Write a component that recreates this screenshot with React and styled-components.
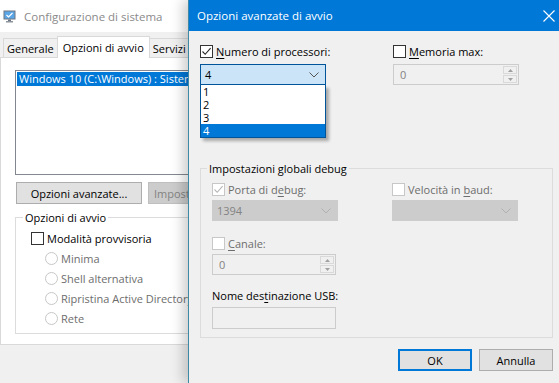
import React from 'react';
import styled, { createGlobalStyle } from 'styled-components';

const GlobalStyle = createGlobalStyle`
  html, body {
    margin: 0;
    padding: 0;
    background: #f0f0f0;
  }
  body {
    font-family: "Open Sans", "Noto Sans", sans-serif;
    font-size: 11px;
    color: #000;
  }
`;

const Screen = styled.div`
  display: flex;
  width: 559px;
  height: 383px;
  overflow: hidden;
  background: #f0f0f0;
`;

/* ---------- back window (Configurazione di sistema) ---------- */

const BackWindow = styled.div`
  flex: none;
  width: 188px;
  display: flex;
  flex-direction: column;
  overflow: hidden;
  background: #f0f0f0;
`;

const BackTitle = styled.div`
  flex: none;
  height: 32px;
  display: flex;
  align-items: center;
  gap: 7px;
  padding-left: 3px;
  background: #fff;
  color: #8a8a8a;
  font-size: 11.5px;
  white-space: nowrap;
`;

const TabStrip = styled.div`
  flex: none;
  height: 25px;
  display: flex;
  align-items: flex-end;
  padding-left: 3px;
  width: 420px;
`;

const Tab = styled.div`
  position: relative;
  height: ${p => (p.$active ? '21px' : '18px')};
  padding: 0 ${p => (p.$active ? '5px' : '3px')};
  margin: 0 ${p => (p.$active ? '-1px' : '0')};
  margin-bottom: ${p => (p.$active ? '-1px' : '0')};
  z-index: ${p => (p.$active ? 1 : 0)};
  display: flex;
  align-items: center;
  background: ${p => (p.$active ? '#fff' : '#f0f0f0')};
  border: 1px solid #d9d9d9;
  border-bottom: none;
  white-space: nowrap;
`;

const TabPanel = styled.div`
  flex: none;
  width: 420px;
  height: 288px;
  padding: 12px 0 0 14px;
  box-sizing: border-box;
  background: #fff;
  border: 1px solid #d9d9d9;
`;

const ListBox = styled.div`
  width: 300px;
  height: 105px;
  box-sizing: border-box;
  padding: 1px;
  border: 1px solid #828790;
  background: #fff;
`;

const ListItem = styled.div`
  height: 14px;
  line-height: 14px;
  padding-left: 2px;
  white-space: nowrap;
  background: ${p => (p.$selected ? '#0078d7' : 'transparent')};
  color: ${p => (p.$selected ? '#fff' : '#000')};
`;

const ButtonRow = styled.div`
  display: flex;
  gap: 6px;
  margin-top: 7px;
  margin-left: 1px;
`;

const Button = styled.div`
  flex: none;
  width: ${p => (p.$w ? `${p.$w}px` : 'auto')};
  height: 22px;
  padding: 0 5px;
  box-sizing: border-box;
  display: flex;
  align-items: center;
  justify-content: center;
  white-space: nowrap;
  background: ${p => (p.$disabled ? '#cccccc' : '#e1e1e1')};
  color: ${p => (p.$disabled ? '#838383' : '#000')};
  border: 1px solid ${p => (p.$default ? '#0078d7' : p.$disabled ? '#bfbfbf' : '#adadad')};
  box-shadow: ${p => (p.$default ? 'inset 0 0 0 1px #0078d7' : 'none')};
`;

const GroupBox = styled.fieldset`
  margin: ${p => p.$mt || 0}px 0 0 0;
  padding: 0 0 ${p => p.$pb || 6}px ${p => p.$pl || 8}px;
  border: 1px solid #dcdcdc;
  width: ${p => p.$w}px;
  box-sizing: border-box;
  min-width: 0;
`;

const Legend = styled.legend`
  padding: 0 2px;
  margin-left: ${p => p.$ml || 0}px;
  line-height: 15px;
  white-space: nowrap;
`;

const OptionRow = styled.div`
  height: 20px;
  display: flex;
  align-items: center;
  gap: 3px;
  margin-top: ${p => p.$mt || 0}px;
  padding-left: ${p => p.$indent || 0}px;
  white-space: nowrap;
  color: ${p => (p.$disabled ? '#6d6d6d' : '#000')};
`;

const Radio = styled.span`
  flex: none;
  width: 11px;
  height: 11px;
  border-radius: 50%;
  border: 1px solid #c7c7c7;
  background: #fff;
`;

/* ---------- dialog (Opzioni avanzate di avvio) ---------- */

const Dialog = styled.div`
  position: relative;
  z-index: 2;
  flex: 1;
  display: flex;
  flex-direction: column;
  border-left: 1px solid #3e8aa4;
  background: #f0f0f0;
  box-shadow: -5px 0 12px rgba(0, 0, 0, 0.2);
`;

const DialogTitle = styled.div`
  flex: none;
  height: 31px;
  display: flex;
  align-items: center;
  justify-content: space-between;
  padding: 0 4px 0 8px;
  background: #0078d7;
  color: #fff;
  font-size: 11.5px;
`;

const DialogBody = styled.div`
  padding: 13px 6px 0 11px;
`;

const TopGrid = styled.div`
  display: grid;
  grid-template-columns: 193px 126px;
  row-gap: 5px;
  align-items: center;
`;

const CheckLabel = styled.label`
  display: flex;
  align-items: center;
  gap: 3px;
  height: 15px;
  white-space: nowrap;
  color: ${p => (p.$disabled ? '#6d6d6d' : '#000')};
  & u {
    text-underline-offset: 2px;
  }
`;

const Box = styled.span`
  flex: none;
  width: 11px;
  height: 11px;
  display: flex;
  align-items: center;
  justify-content: center;
  border: 1px solid ${p => (p.$disabled ? '#c7c7c7' : '#333')};
  background: #fff;
`;

const ComboWrap = styled.div`
  position: relative;
  width: 126px;
`;

const Combo = styled.div`
  height: 21px;
  box-sizing: border-box;
  display: flex;
  align-items: center;
  justify-content: space-between;
  padding: 0 6px 0 4px;
  background: ${p => (p.$open ? '#cce4f7' : p.$disabled ? '#cccccc' : '#fff')};
  border: 1px solid ${p => (p.$open ? '#005499' : '#cccccc')};
  color: ${p => (p.$disabled ? '#838383' : '#000')};
`;

const DropList = styled.div`
  position: absolute;
  top: 100%;
  left: 0;
  width: 100%;
  box-sizing: border-box;
  border: 1px solid #005499;
  border-top: none;
  background: #fff;
  box-shadow: 3px 3px 3px rgba(0, 0, 0, 0.3);
`;

const DropItem = styled.div`
  height: 13px;
  line-height: 13px;
  padding-left: 2px;
  background: ${p => (p.$selected ? '#0078d7' : '#fff')};
  color: ${p => (p.$selected ? '#fff' : '#000')};
`;

const Spin = styled.div`
  width: ${p => p.$w || 126}px;
  height: 21px;
  box-sizing: border-box;
  display: flex;
  align-items: stretch;
  background: #f0f0f0;
  border: 1px solid #cccccc;
  color: #838383;
`;

const SpinValue = styled.div`
  flex: 1;
  display: flex;
  align-items: center;
  padding-left: 6px;
`;

const SpinButtons = styled.div`
  width: 14px;
  display: flex;
  flex-direction: column;
  gap: 1px;
  padding: 1px 1px 1px 0;
`;

const SpinButton = styled.div`
  flex: 1;
  display: flex;
  align-items: center;
  justify-content: center;
  background: #f0f0f0;
  border: 1px solid #d9d9d9;
`;

const TextBox = styled.div`
  width: 124px;
  height: 22px;
  box-sizing: border-box;
  background: #f0f0f0;
  border: 1px solid #cccccc;
`;

const DebugGrid = styled.div`
  display: grid;
  grid-template-columns: 180px 126px;
  align-items: start;
  margin-top: 6px;
`;

const Cell = styled.div`
  display: flex;
  flex-direction: column;
  gap: ${p => p.$gap || 3}px;
  margin-top: ${p => p.$mt || 0}px;
`;

const PlainLabel = styled.div`
  height: 15px;
  line-height: 15px;
  white-space: nowrap;
  & u {
    text-underline-offset: 2px;
  }
`;

const Footer = styled.div`
  display: flex;
  justify-content: flex-end;
  gap: 7px;
  margin-top: 11px;
`;

/* ---------- drawings ---------- */

const Check = ({ color = '#222' }) => (
  <svg width="11" height="11" viewBox="0 0 11 11">
    <polyline points="1.5,5.5 4.2,8.3 9.6,2.2" fill="none" stroke={color} strokeWidth="1.1" />
  </svg>
);

const Chevron = ({ color = '#555' }) => (
  <svg width="10" height="6" viewBox="0 0 10 6">
    <polyline points="0.5,0.5 5,5 9.5,0.5" fill="none" stroke={color} strokeWidth="1" />
  </svg>
);

const Tri = ({ up }) => (
  <svg width="5" height="3" viewBox="0 0 5 3">
    <polygon points={up ? '0,3 2.5,0 5,3' : '0,0 5,0 2.5,3'} fill="#a0a0a0" />
  </svg>
);

const CloseX = () => (
  <svg width="12" height="12" viewBox="0 0 12 12">
    <path d="M0.5 0.5 L11.5 11.5 M11.5 0.5 L0.5 11.5" stroke="#fff" strokeWidth="1.1" />
  </svg>
);

const AppIcon = () => (
  <svg width="14" height="14" viewBox="0 0 14 14">
    <rect x="0.5" y="1.5" width="12" height="9" fill="#6e7681" />
    <rect x="1.5" y="2.5" width="10" height="7" fill="#5aa5e6" />
    <rect x="5" y="10.5" width="3" height="1.5" fill="#6e7681" />
    <rect x="3" y="12" width="7" height="1.5" fill="#8c939c" />
    <path d="M3.5 6 L5.5 8 L9.5 4" stroke="#fff" strokeWidth="1.2" fill="none" />
  </svg>
);

const CheckBox = ({ checked, disabled, children }) => (
  <CheckLabel $disabled={disabled}>
    <Box $disabled={disabled}>{checked && <Check color={disabled ? '#b5b5b5' : '#222'} />}</Box>
    <span>{children}</span>
  </CheckLabel>
);

const SpinBox = ({ value, w }) => (
  <Spin $w={w}>
    <SpinValue>{value}</SpinValue>
    <SpinButtons>
      <SpinButton><Tri up /></SpinButton>
      <SpinButton><Tri /></SpinButton>
    </SpinButtons>
  </Spin>
);

const App = () => (
  <>
    <GlobalStyle />
    <Screen>
      <BackWindow>
        <BackTitle>
          <AppIcon />
          <span>Configurazione di sistema</span>
        </BackTitle>
        <TabStrip>
          <Tab>Generale</Tab>
          <Tab $active>Opzioni di avvio</Tab>
          <Tab>Servizi</Tab>
          <Tab>Avvio</Tab>
        </TabStrip>
        <TabPanel>
          <ListBox>
            <ListItem $selected>
              Windows 10 (C:\Windows) : Sistema operativo corrente; Sistema operativo predefinito
            </ListItem>
          </ListBox>
          <ButtonRow>
            <Button $w={126}>Opzioni avanzate...</Button>
            <Button $disabled>Imposta come predefinito</Button>
          </ButtonRow>
          <GroupBox $mt={6} $w={380} $pl={15} $pb={5}>
            <Legend $ml={-8}>Opzioni di avvio</Legend>
            <OptionRow $mt={3}>
              <Box />
              <span>Modalità provvisoria</span>
            </OptionRow>
            <OptionRow $indent={14} $disabled><Radio />Minima</OptionRow>
            <OptionRow $indent={14} $disabled><Radio />Shell alternativa</OptionRow>
            <OptionRow $indent={14} $disabled><Radio />Ripristina Active Directory</OptionRow>
            <OptionRow $indent={14} $disabled><Radio />Rete</OptionRow>
          </GroupBox>
        </TabPanel>
      </BackWindow>

      <Dialog>
        <DialogTitle>
          <span>Opzioni avanzate di avvio</span>
          <CloseX />
        </DialogTitle>
        <DialogBody>
          <TopGrid>
            <CheckBox checked><u>N</u>umero di processori:</CheckBox>
            <CheckBox><u>M</u>emoria max:</CheckBox>
            <ComboWrap>
              <Combo $open>
                <span>4</span>
                <Chevron />
              </Combo>
              <DropList>
                <DropItem>1</DropItem>
                <DropItem>2</DropItem>
                <DropItem>3</DropItem>
                <DropItem $selected>4</DropItem>
              </DropList>
            </ComboWrap>
            <SpinBox value="0" />
          </TopGrid>

          <GroupBox $mt={76} $w={353} $pl={11} $pb={8}>
            <Legend $ml={-5}>Impostazioni globali debug</Legend>
            <DebugGrid>
              <Cell>
                <CheckBox checked disabled>Porta di d<u>e</u>bug:</CheckBox>
                <ComboWrap>
                  <Combo $disabled>
                    <span>1394</span>
                    <Chevron color="#b0b0b0" />
                  </Combo>
                </ComboWrap>
              </Cell>
              <Cell>
                <CheckBox disabled>Velocità in <u>b</u>aud:</CheckBox>
                <ComboWrap>
                  <Combo $disabled>
                    <span />
                    <Chevron color="#b0b0b0" />
                  </Combo>
                </ComboWrap>
              </Cell>
              <Cell $mt={15}>
                <CheckBox disabled><u>C</u>anale:</CheckBox>
                <SpinBox value="0" w={124} />
              </Cell>
              <div />
              <Cell $mt={13} $gap={4}>
                <PlainLabel>Nome des<u>t</u>inazione USB:</PlainLabel>
                <TextBox />
              </Cell>
            </DebugGrid>
          </GroupBox>

          <Footer>
            <Button $w={74} $default>OK</Button>
            <Button $w={74}>Annulla</Button>
          </Footer>
        </DialogBody>
      </Dialog>
    </Screen>
  </>
);

export default App;
